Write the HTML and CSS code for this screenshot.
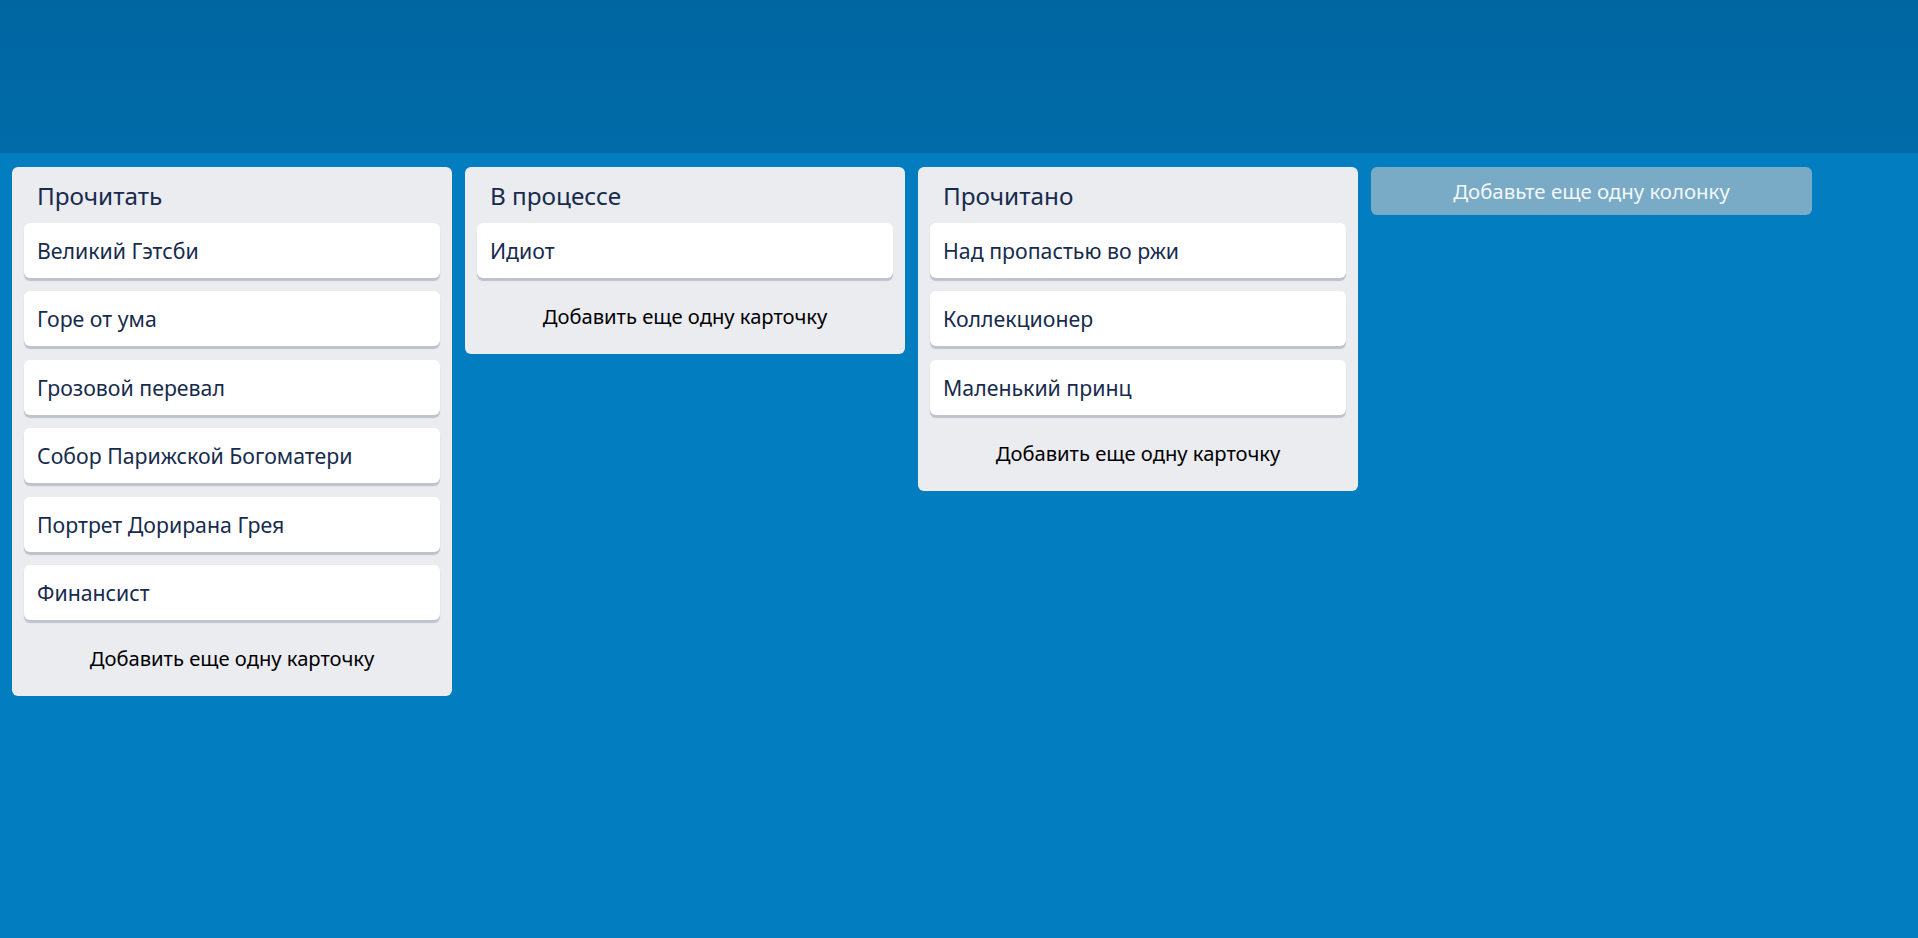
FILE: index.html
```html
<!DOCTYPE html>
<html lang="ru">
<head>
<meta charset="utf-8">
<title>Доска</title>
<link rel="stylesheet" href="styles.css">
</head>
<body>
<header class="topbar"></header>
<main class="board">
  <section class="column">
    <h2 class="column-title">Прочитать</h2>
    <div class="cards">
      <div class="card">Великий Гэтсби</div>
      <div class="card">Горе от ума</div>
      <div class="card">Грозовой перевал</div>
      <div class="card">Собор Парижской Богоматери</div>
      <div class="card">Портрет Дорирана Грея</div>
      <div class="card">Финансист</div>
    </div>
    <div class="add-card">Добавить еще одну карточку</div>
  </section>
  <section class="column">
    <h2 class="column-title">В процессе</h2>
    <div class="cards">
      <div class="card">Идиот</div>
    </div>
    <div class="add-card">Добавить еще одну карточку</div>
  </section>
  <section class="column">
    <h2 class="column-title">Прочитано</h2>
    <div class="cards">
      <div class="card">Над пропастью во ржи</div>
      <div class="card">Коллекционер</div>
      <div class="card">Маленький принц</div>
    </div>
    <div class="add-card">Добавить еще одну карточку</div>
  </section>
  <div class="add-column">Добавьте еще одну колонку</div>
</main>
</body>
</html>
```
FILE: styles.css
```css
html, body {
  margin: 0;
  padding: 0;
  height: 100%;
}
body {
  background: #027dc0;
  font-family: "Noto Sans", "Open Sans", sans-serif;
}
.topbar {
  height: 153px;
  background: linear-gradient(#0066a2, #006ba8);
}
.board {
  display: flex;
  align-items: flex-start;
  gap: 13px;
  padding: 14px 12px;
}
.column {
  width: 440px;
  flex: none;
  box-sizing: border-box;
  background: #ebecf0;
  border-radius: 6px;
  padding: 0 12px;
}
.column-title {
  margin: 0;
  height: 56px;
  display: flex;
  align-items: center;
  padding-left: 13px;
  font-size: 24.3px;
  font-weight: 400;
  color: #172b4d;
}
.cards {
  display: flex;
  flex-direction: column;
  gap: 13.4px;
}
.card {
  height: 55px;
  display: flex;
  align-items: center;
  padding-left: 13px;
  background: #fff;
  border-radius: 6px;
  box-shadow: 0 3px 1px rgba(9, 30, 66, 0.2);
  font-size: 21.3px;
  color: #172b4d;
}
.add-card {
  height: 76px;
  display: flex;
  align-items: center;
  justify-content: center;
  font-size: 20.2px;
  color: #000;
}
.add-column {
  width: 441px;
  height: 48px;
  flex: none;
  display: flex;
  align-items: center;
  justify-content: center;
  background: #79aac6;
  border-radius: 6px;
  color: #f4f8fb;
  font-size: 20.4px;
}
```
